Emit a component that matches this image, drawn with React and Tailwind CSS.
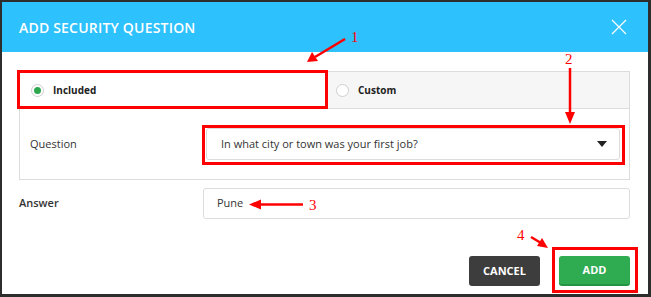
import React from "react";

function Radio({ checked }) {
  return (
    <span className="flex h-[13px] w-[13px] items-center justify-center rounded-full border border-[#cfcfcf] bg-white">
      {checked && <span className="h-[7px] w-[7px] rounded-full bg-[#2ea84f]" />}
    </span>
  );
}

export default function App() {
  return (
    <div
      className="relative h-[297px] w-[651px] bg-[#2d2d2d] pb-[3px] pl-[2px] pr-[3px] pt-[2px]"
      style={{ fontFamily: '"Open Sans", "Liberation Sans", sans-serif' }}
    >
      <div className="flex h-full flex-col bg-white">
        <div className="flex h-[50px] items-center justify-between bg-[#2dc1fd] pl-[17px] pr-[21px]">
          <h1 className="text-[14px] font-semibold tracking-[0.2px] text-white">ADD SECURITY QUESTION</h1>
          <svg width="16" height="16" viewBox="0 0 16 16" className="text-white">
            <path d="M1 1 L15 15 M15 1 L1 15" stroke="currentColor" strokeWidth="1.2" />
          </svg>
        </div>

        <div className="flex flex-col pl-[17px] pr-[18px] pt-[19px]">
          <div className="border border-[#dcdcdc]">
            <div className="flex h-[37px] border-b border-[#dcdcdc] bg-[#f6f6f6]">
              <div className="flex w-[308px] items-center gap-[9px] bg-white pl-[11px]">
                <Radio checked />
                <span className="text-[10px] font-bold text-[#222]">Included</span>
              </div>
              <div className="flex flex-1 items-center gap-[9px] pl-[8px]">
                <Radio />
                <span className="text-[10px] font-bold text-[#222]">Custom</span>
              </div>
            </div>
            <div className="flex h-[70px] items-center pl-[10px] pr-[9px]">
              <span className="w-[176px] text-[11px] text-[#333]">Question</span>
              <div className="flex h-[32px] flex-1 items-center justify-between rounded-[3px] border border-[#dcdcdc] pl-[14px] pr-[12px]">
                <span className="text-[11px] text-[#333]">In what city or town was your first job?</span>
                <svg width="10" height="6" viewBox="0 0 10 6">
                  <path d="M0 0 L10 0 L5 6 Z" fill="#222" />
                </svg>
              </div>
            </div>
          </div>

          <div className="mt-[8px] flex items-center">
            <span className="w-[184px] text-[11px] font-semibold text-[#333]">Answer</span>
            <div className="flex h-[31px] flex-1 items-center rounded-[3px] border border-[#dcdcdc] pl-[13px]">
              <span className="text-[11px] text-[#333]">Pune</span>
            </div>
          </div>

          <div className="mt-[37px] flex justify-end gap-[19px]">
            <button className="h-[30px] w-[71px] rounded-[3px] bg-[#3d3d3d] text-[11px] font-bold text-white">
              CANCEL
            </button>
            <button className="h-[30px] w-[71px] rounded-[3px] border-b-2 border-[#239441] bg-[#2fab52] text-[11px] font-bold text-white">
              ADD
            </button>
          </div>
        </div>
      </div>

      {/* annotation boxes */}
      <div className="pointer-events-none absolute left-[17px] top-[70px] h-[39px] w-[311px] border-[3px] border-[#ff0000]" />
      <div className="pointer-events-none absolute left-[202px] top-[125px] h-[40px] w-[423px] border-[3px] border-[#ff0000]" />
      <div className="pointer-events-none absolute left-[552px] top-[247px] h-[46px] w-[86px] border-[3px] border-[#ff0000]" />

      {/* annotation arrows */}
      <svg className="pointer-events-none absolute left-0 top-0" width="651" height="297" viewBox="0 0 651 297">
        <g stroke="#ff0000" strokeWidth="2.5" fill="none">
          <line x1="345" y1="39" x2="315" y2="57" />
          <line x1="570" y1="68" x2="570" y2="114" />
          <line x1="303" y1="204.5" x2="260" y2="204.5" />
          <line x1="531" y1="237" x2="541" y2="243" />
        </g>
        <g fill="#ff0000">
          <polygon points="307,62 312,52 318,61" />
          <polygon points="565,112 575,112 570,124" />
          <polygon points="249,204.5 261,199.5 261,209.5" />
          <polygon points="548,248 537,246 542,238" />
        </g>
        <g fill="#ff0000" fontFamily='"Liberation Serif", serif' fontSize="15">
          <text x="351" y="42">1</text>
          <text x="565" y="64">2</text>
          <text x="309" y="210">3</text>
          <text x="517" y="240">4</text>
        </g>
      </svg>
    </div>
  );
}
